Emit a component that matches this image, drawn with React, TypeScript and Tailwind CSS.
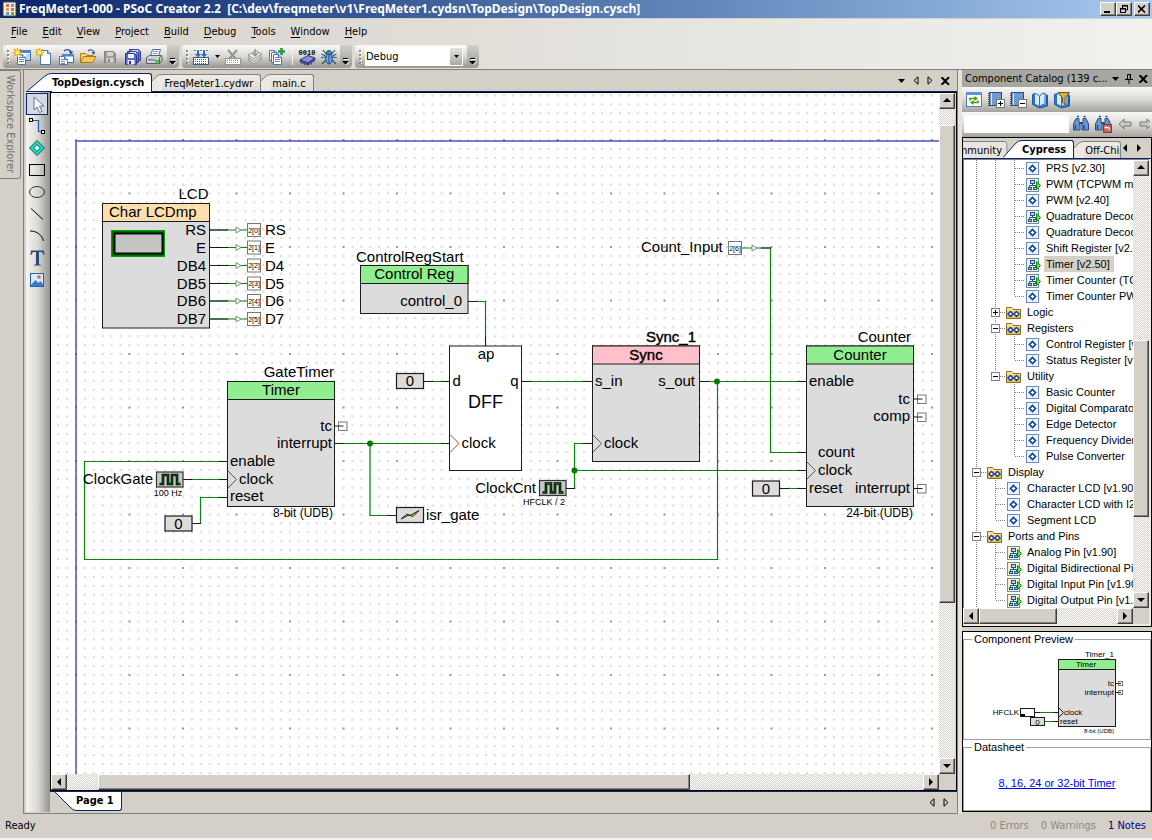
import { useState, type ReactNode } from "react";

/* ---------- small building blocks ---------- */

const bevel = "border border-t-white border-l-white border-r-[#404040] border-b-[#404040] bg-[#d4d0c8]";
const dither = "bg-[repeating-conic-gradient(#ffffff_0_25%,#d4d0c8_0_50%)] bg-[length:2px_2px]";

function Arrow({ dir }: { dir: "up" | "down" | "left" | "right" }) {
  const d = {
    up: "M0 5 L4 1 L8 5Z",
    down: "M0 2 L8 2 L4 6Z",
    left: "M6 0 L2 4 L6 8Z",
    right: "M2 0 L6 4 L2 8Z",
  }[dir];
  return (
    <svg width="8" height="8" viewBox="0 0 8 8" aria-hidden="true">
      <path d={d} fill="#000" />
    </svg>
  );
}

function ScrollButton({ dir }: { dir: "up" | "down" | "left" | "right" }) {
  return (
    <button aria-label={"Scroll " + dir} className={"flex size-4 shrink-0 items-center justify-center shadow-[inset_-1px_-1px_0_#808080] " + bevel}>
      <Arrow dir={dir} />
    </button>
  );
}

function ScrollBar({ vertical, before, thumb, after }: { vertical?: boolean; before: number; thumb: number; after: number }) {
  return (
    <div className={"flex shrink-0 " + (vertical ? "w-4 flex-col " : "h-4 ") + dither}>
      <ScrollButton dir={vertical ? "up" : "left"} />
      <div style={{ flexGrow: before }} />
      <div className={"shadow-[inset_-1px_-1px_0_#808080] " + bevel} style={{ flexGrow: thumb }} />
      <div style={{ flexGrow: after }} />
      <ScrollButton dir={vertical ? "down" : "right"} />
    </div>
  );
}

function Icon({ children }: { children: ReactNode }) {
  return (
    <svg width="18" height="18" viewBox="0 0 18 18" aria-hidden="true" className="shrink-0">
      {children}
    </svg>
  );
}

const Sun = () => (
  <g>
    <path d="M4.500 0V9M0 4.500H9M1 1L8 8M8 1L1 8" stroke="#f0a800" strokeWidth="1.300" />
    <circle cx="4.500" cy="4.500" r="2.300" fill="#fff27a" stroke="#f0b010" strokeWidth=".8" />
  </g>
);

const Page = ({ x, y, w = 9, h = 11 }: { x: number; y: number; w?: number; h?: number }) => (
  <g>
    <path d={`M${x + 0.5} ${y + 0.5}h${w - 3}l3 3v${h - 3}h${-w}z`} fill="#fff" stroke="#4a74b4" />
    <path d={`M${x + w - 3 + 0.5} ${y + 0.5}v3h3`} fill="#c5d8f2" stroke="#4a74b4" />
  </g>
);

const Lines = ({ x, y, n = 4, w = 5 }: { x: number; y: number; n?: number; w?: number }) => (
  <path d={Array.from({ length: n }, (_, i) => `M${x} ${y + i * 2 + 0.5}h${w}`).join("")} stroke="#5b84c0" />
);

const Floppy = ({ x, y, body, edge, label }: { x: number; y: number; body: string; edge: string; label: string }) => (
  <g>
    <path d={`M${x + 0.5} ${y + 0.5}h9l2 2v9h-11z`} fill={body} stroke={edge} />
    <rect x={x + 3} y={y + 1} width="6" height="4" fill={label} />
    <rect x={x + 2.5} y={y + 7} width="7" height="4.500" fill={label} />
    <rect x={x + 4} y={y + 8} width="2" height="3" fill={edge} />
  </g>
);

const Dots = ({ x, y, w, h, color }: { x: number; y: number; w: number; h: number; color: string }) => (
  <g>
    <rect x={x + 0.5} y={y + 0.5} width={w - 1} height={h - 1} fill="#fff" stroke={color} />
    <path
      d={Array.from({ length: Math.floor((h - 2) / 2) }, (_, r) => `M${x + 2} ${y + 2.5 + r * 2}h${w - 4}`).join("")}
      stroke={color}
      strokeDasharray="1 1"
    />
  </g>
);

const NewProject = () => (
  <Icon>
    <rect x="5.500" y="2.500" width="12" height="10" fill="#fff" stroke="#3f6db3" />
    <rect x="5" y="2" width="13" height="3" fill="#4f83cf" />
    <path d="M13 6h4v6h-4z" fill="#b9d3f5" />
    <Page x={4} y={6} w={8} h={10} />
    <Lines x={6} y={9} n={3} />
    <Sun />
  </Icon>
);
const NewFile = () => (
  <Icon>
    <Page x={5} y={2} w={10} h={14} />
    <Sun />
  </Icon>
);
const OpenProject = () => (
  <Icon>
    <path d="M7 3C9 1 13 1 14 4" fill="none" stroke="#1f4c96" strokeWidth="1.300" />
    <path d="M11.500 3.500h5l-2.500 3z" fill="#1f4c96" />
    <rect x="5.500" y="6.500" width="11" height="8" fill="#fff" stroke="#3f6db3" />
    <rect x="5" y="6" width="12" height="2.500" fill="#4f83cf" />
    <Page x={2} y={8} w={8} h={8} />
    <Lines x={4} y={11} n={3} w={4} />
  </Icon>
);
const OpenFolder = () => (
  <Icon>
    <path d="M9 3C11 1 14 2 15 4" fill="none" stroke="#345e9e" strokeWidth="1.200" />
    <path d="M12.500 4h4l-2 3z" fill="#345e9e" />
    <path d="M1.500 14.500v-9h5l1.500 2h6v3" fill="#f7d978" stroke="#a97a14" />
    <path d="M1.500 14.500l3-6h12.500l-3.500 6z" fill="#f8c95a" stroke="#a97a14" />
  </Icon>
);
const Save = () => (
  <Icon>
    <Floppy x={3} y={3} body="#9c9c98" edge="#83837f" label="#d4d3cd" />
  </Icon>
);
const SaveAll = () => (
  <Icon>
    <Floppy x={6} y={1} body="#7078d0" edge="#333c96" label="#e2e6fb" />
    <Floppy x={4} y={3} body="#6c74cc" edge="#333c96" label="#e2e6fb" />
    <Floppy x={2} y={5} body="#5c66c4" edge="#2b3488" label="#eef0ff" />
  </Icon>
);
const Printer = () => (
  <Icon>
    <path d="M5.500 8l2-6.500h8l-2 6.500z" fill="#fff" stroke="#4d6f9e" />
    <path d="M8 3.500h5M7.500 5.500h5" stroke="#7d9dca" />
    <path d="M1.500 9.500l3-2h12l-2 2v6h-13z" fill="#cfd4dc" stroke="#55606f" />
    <path d="M14.500 15.500l2.500-2.500V8" fill="none" stroke="#55606f" />
    <rect x="3" y="11" width="7" height="1.500" fill="#7a8596" />
    <rect x="10" y="12" width="4" height="2.500" fill="#2ecc2e" />
  </Icon>
);
const Build = () => (
  <Icon>
    <rect x="2" y="1" width="14" height="3" fill="#fff" />
    <path d="M2 2.500h14" stroke="#3c70bd" strokeDasharray="2 1" />
    <path d="M6 3v4M12 3v4" stroke="#2d67c4" strokeWidth="2" />
    <path d="M3 6h6l-3 3.500zM9 6h6l-3 3.500z" fill="#2d67c4" />
    <Dots x={1} y={9} w={16} h={8} color="#40587c" />
  </Icon>
);
const CancelBuild = () => (
  <Icon>
    <Dots x={1} y={10} w={16} h={7} color="#94948f" />
    <path d="M4 2l8 9M13 2l-8 9" stroke="#94948f" strokeWidth="2" />
  </Icon>
);
const Layers = () => (
  <Icon>
    <path d="M2 12l8-4 6 3-8 5z" fill="#d9d9d5" stroke="#94948f" />
    <path d="M2 9.500l8-4 6 3-8 5z" fill="#e4e4e0" stroke="#94948f" />
    <path d="M2 7l8-4 6 3-8 5z" fill="#eeeeeb" stroke="#94948f" />
    <path d="M9 1v6M6.500 5l2.500 3 3-3" stroke="#94948f" strokeWidth="1.500" fill="none" />
  </Icon>
);
const AddPages = () => (
  <Icon>
    <Page x={1} y={2} w={8} h={10} />
    <Page x={3} y={4} w={8} h={10} />
    <Page x={5} y={6} w={8} h={10} />
    <Lines x={7} y={9} n={3} />
    <path d="M13.500 0v7M10 3.500h7" stroke="#2c9a4a" strokeWidth="2.600" />
  </Icon>
);
const Chip = () => (
  <Icon>
    <path d="M2 12l8-4.500 7 2.500-7 5z" fill="#8a90dc" stroke="#2b2f80" />
    <path d="M2 12v2l8 3v-2zM10 15l7-5v2l-7 5z" fill="#474da4" stroke="#2b2f80" strokeWidth=".7" />
    <path d="M3.500 14.500v2M6.500 15.500v2M13.500 15v2M16 13v2" stroke="#666" />
    <text x="9" y="6.500" textAnchor="middle" fontSize="7" fontWeight="bold" fontFamily="'Liberation Mono', monospace">0010</text>
  </Icon>
);
const Bug = () => (
  <Icon>
    <path d="M3 2l4 5M15 2l-4 5M1 9.500l5-.5M17 9.500l-5-.5M2 16l4-4M16 16l-4-4M1.500 6l4 2M16.500 6l-4 2" stroke="#26527f" strokeWidth="1.200" fill="none" />
    <circle cx="9" cy="5" r="2.500" fill="#4c8ccc" stroke="#1d4673" />
    <ellipse cx="9" cy="11" rx="3.300" ry="5" fill="#6aabea" stroke="#1d4673" />
    <path d="M9 6.500v9" stroke="#1d4673" />
  </Icon>
);

const Grip = () => (
  <svg width="4" height="14" aria-hidden="true" className="shrink-0">
    {[0, 4, 8, 12].map((y) => (
      <g key={y}>
        <rect x="1" y={y + 1} width="2" height="2" fill="#fff" />
        <rect x="0" y={y} width="2" height="2" fill="#8c8a84" />
      </g>
    ))}
  </svg>
);

function ToolButton({ label, children }: { label: string; children: ReactNode }) {
  return (
    <button aria-label={label} className="flex h-5 w-[22px] shrink-0 items-center justify-center">
      {children}
    </button>
  );
}

function ToolStrip({ children }: { children: ReactNode }) {
  return (
    <div className="flex h-[23px]">
      <div className="flex items-center rounded-l-[3px] bg-linear-to-b from-[#fafaf8] via-[#d9d7d1] to-[#96958f] pl-1">{children}</div>
      <button aria-label="Toolbar options" className="flex w-3 items-end justify-center rounded-r-[4px] bg-linear-to-b from-[#d0cfca] to-[#9b9a94] pb-[3px]">
        <svg width="8" height="7" aria-hidden="true">
          <path d="M2 1.500h5M4 7l4-4" stroke="#fff" fill="none" />
          <path d="M1 .5h5" stroke="#000" />
          <path d="M0 3h7l-3.500 3.500z" fill="#000" />
        </svg>
      </button>
    </div>
  );
}

/* ---------- header ---------- */

const menus = ["File", "Edit", "View", "Project", "Build", "Debug", "Tools", "Window", "Help"];

function TitleBar() {
  const btn = "flex h-[14px] w-4 items-center justify-center shadow-[inset_-1px_-1px_0_#808080] " + bevel;
  return (
    <header className="flex h-[18px] shrink-0 items-center bg-linear-to-r from-[#0a246a] to-[#a6caf0] pr-[2px] pl-[2px]">
      <svg width="15" height="16" aria-hidden="true">
        <rect x="1" y="1" width="13" height="14" fill="#f2eee6" stroke="#444" />
        <path d="M.5 2v13M14.500 2v13" stroke="#222" strokeDasharray="1.500 1.500" />
        <rect x="4" y="3" width="3" height="3" fill="#e0703c" />
        <rect x="9" y="3" width="3" height="3" fill="#6c9ad8" />
        <rect x="4" y="7" width="3" height="3" fill="#dba63a" />
        <rect x="9" y="7" width="3" height="3" fill="#e0703c" />
        <rect x="4" y="11" width="3" height="3" fill="#6c9ad8" />
        <rect x="9" y="11" width="3" height="3" fill="#6aa84a" />
      </svg>
      <h1 className="ml-[2px] flex-1 overflow-hidden font-['Noto_Sans','DejaVu_Sans_Condensed',sans-serif] text-[12px] leading-[18px] font-bold whitespace-pre text-white">
        {"FreqMeter1-000 - PSoC Creator 2.2  [C:\\dev\\freqmeter\\v1\\FreqMeter1.cydsn\\TopDesign\\TopDesign.cysch]"}
      </h1>
      <button aria-label="Minimize" className={btn}>
        <svg width="10" height="9"><path d="M1 7h6" stroke="#000" strokeWidth="2" /></svg>
      </button>
      <button aria-label="Restore" className={btn}>
        <svg width="10" height="10">
          <path d="M3 2h6M3.500 1v3M8.500 1v5H6" stroke="#000" fill="none" />
          <path d="M3 1.500h6" stroke="#000" />
          <rect x="1.500" y="4.500" width="5" height="4" fill="#d4d0c8" stroke="#000" />
          <path d="M1 5h6" stroke="#000" />
        </svg>
      </button>
      <button aria-label="Close" className={btn + " ml-[2px]"}>
        <svg width="8" height="8"><path d="M0 .5l7 7M7 .5l-7 7" stroke="#000" strokeWidth="1.600" /></svg>
      </button>
    </header>
  );
}

function Commands() {
  return (
    <div className="flex h-[52px] shrink-0 flex-col border-t border-b border-t-[#d4d0c8] border-b-[#808080] bg-linear-to-r from-[#d6d2ca] to-[#f2f1ee]">
      <nav className="flex h-[26px] items-center gap-px pl-1">
        {menus.map((m) => (
          <button key={m} className="px-[7px] leading-4">
            <span className="underline underline-offset-2">{m[0]}</span>
            {m.slice(1)}
          </button>
        ))}
      </nav>
      <div className="flex gap-[3px] pl-[3px]">
        <ToolStrip>
          <Grip />
          <ToolButton label="New project"><NewProject /></ToolButton>
          <ToolButton label="New file"><NewFile /></ToolButton>
          <ToolButton label="Open project"><OpenProject /></ToolButton>
          <ToolButton label="Open file"><OpenFolder /></ToolButton>
          <ToolButton label="Save"><Save /></ToolButton>
          <ToolButton label="Save all"><SaveAll /></ToolButton>
          <ToolButton label="Print"><Printer /></ToolButton>
          <span className="w-[2px]" />
        </ToolStrip>
        <ToolStrip>
          <Grip />
          <ToolButton label="Build"><Build /></ToolButton>
          <button aria-label="Build options" className="flex w-[10px] justify-center">
            <svg width="5" height="3"><path d="M0 0h5L2.500 3z" /></svg>
          </button>
          <ToolButton label="Cancel build"><CancelBuild /></ToolButton>
          <ToolButton label="Generate application"><Layers /></ToolButton>
          <ToolButton label="Add component"><AddPages /></ToolButton>
          <span className="mr-[3px] ml-1 h-4 w-px bg-[#f4f3f0]" />
          <ToolButton label="Program"><Chip /></ToolButton>
          <ToolButton label="Debug"><Bug /></ToolButton>
        </ToolStrip>
        <ToolStrip>
          <Grip />
          <div className="mr-1 ml-[2px] flex h-[19px] items-center bg-white p-px">
            <select aria-label="Configuration" className="w-[84px] appearance-none bg-white leading-4 outline-none">
              <option>Debug</option>
            </select>
            <span className="flex h-[17px] w-3 items-center justify-center bg-linear-to-b from-[#e6e4df] to-[#a9a8a2]">
              <svg width="5" height="3"><path d="M0 0h5L2.500 3z" /></svg>
            </span>
          </div>
        </ToolStrip>
      </div>
    </div>
  );
}

/* ---------- schematic ---------- */

type Anchor = "start" | "middle" | "end";

function T({ x, y, a = "start", s = 15, heavy, children }: { x: number; y: number; a?: Anchor; s?: number; heavy?: boolean; children: ReactNode }) {
  return (
    <text x={x} y={y} textAnchor={a} fontSize={s} fill="#000" stroke={heavy ? "#000" : "none"} strokeWidth={heavy ? 0.4 : 0}>
      {children}
    </text>
  );
}

function Block({ x, y, w, h, fill, title, heavy }: { x: number; y: number; w: number; h: number; fill: string; title: string; heavy?: boolean }) {
  return (
    <g>
      <rect x={x} y={y} width={w} height={h} fill="#dcdcdc" stroke="#1c1c1c" />
      <rect x={x} y={y} width={w} height={18} fill={fill} stroke="#1c1c1c" />
      <T x={x + w / 2} y={y + 13.5} a="middle" heavy={heavy}>{title}</T>
    </g>
  );
}

const Wire = ({ d }: { d: string }) => <path d={d} fill="none" stroke="#0a850a" strokeWidth="1.200" />;
const Stub = ({ d }: { d: string }) => <path d={d} fill="none" stroke="#1c1c1c" />;
const Node = ({ x, y }: { x: number; y: number }) => <circle cx={x} cy={y} r="3" fill="#007d00" />;
const ClockEdge = ({ x, y }: { x: number; y: number }) => <path d={`M${x} ${y - 9}l9 9l-9 9`} fill="none" stroke="#333" strokeWidth=".8" />;
const Open = ({ x, y }: { x: number; y: number }) => (
  <g>
    <rect x={x + 4} y={y - 4} width="8.500" height="8.500" fill="#fff" stroke="#777" />
    <Stub d={`M${x} ${y}h9`} />
  </g>
);
const Zero = ({ x, y }: { x: number; y: number }) => (
  <g>
    <rect x={x} y={y} width="27" height="15" fill="#dcdcdc" stroke="#1c1c1c" strokeWidth="1.200" />
    <T x={x + 13.5} y={y + 12.5} a="middle">0</T>
  </g>
);
const Clock = ({ x, y }: { x: number; y: number }) => (
  <g>
    <rect x={x} y={y} width="26.500" height="15" fill="#c8c8c8" stroke="#333" strokeWidth="1.200" />
    <path d={`M${x + 3} ${y + 12}h3.500v-9h5v9h4v-9h5v9h3.500`} fill="none" stroke="#000" strokeWidth="2.600" />
    <path d={`M${x + 3} ${y + 12}h3.500v-9h5v9h4v-9h5v9h3.500`} fill="none" stroke="#0c6a12" strokeWidth="1" />
  </g>
);

const lcdPins = [
  ["RS", "RS", 230],
  ["E", "E", 247.5],
  ["DB4", "D4", 265.5],
  ["DB5", "D5", 283.5],
  ["DB6", "D6", 301],
  ["DB7", "D7", 319],
] as const;

function Schematic() {
  return (
    <svg className="block h-full w-full" fontFamily="'Liberation Sans', Arial, sans-serif" role="img" aria-label="Schematic">
      <defs>
        <pattern id="minor" x="6.170" y="1.420" width="8.917" height="8.917" patternUnits="userSpaceOnUse">
          <rect x="0" y="0" width="2" height="2" fill="#dadada" />
        </pattern>
        <pattern id="major" x="24" y="46" width="53.500" height="53.500" patternUnits="userSpaceOnUse">
          <rect x="0" y="0" width="2" height="2" fill="#9a9a9a" />
        </pattern>
      </defs>
      <rect width="100%" height="100%" fill="#fff" />
      <rect width="100%" height="100%" fill="url(#minor)" />
      <rect width="100%" height="100%" fill="url(#major)" />
      <g transform="translate(-51 -93)">
        <path d="M2000 141H76V2000" fill="none" stroke="#3636ae" strokeOpacity=".65" strokeWidth="2" />

        {/* LCD */}
        <T x={208.5} y={199} a="end">LCD</T>
        <rect x="102.500" y="203.500" width="107" height="124.500" fill="#dcdcdc" stroke="#1c1c1c" />
        <rect x="102.500" y="203.500" width="107" height="18" fill="#ffdead" stroke="#1c1c1c" />
        <T x={109} y={217}>Char LCDmp</T>
        <rect x="111.500" y="230.500" width="53" height="26" fill="#007000" stroke="#00a000" />
        <rect x="114.500" y="233.500" width="48" height="20" fill="#c4c4c4" stroke="#0a0a0a" strokeWidth="2" />
        {lcdPins.map(([pin, port, y], i) => (
          <g key={pin}>
            <T x={206} y={y + 5} a="end">{pin}</T>
            <Wire d={`M210 ${y}h37`} />
            <Stub d={`M210 ${y}h18`} />
            <path d={`M236 ${y - 3}l5 3l-5 3z`} fill="#fff" stroke="#888" />
            <rect x="247.500" y={y - 6.5} width="13" height="13" fill="#fff" stroke="#777" />
            <T x={254} y={y + 2.5} a="middle" s={7}>2[{i}]</T>
            <T x={265} y={y + 5}>{port}</T>
          </g>
        ))}

        {/* wires */}
        <Wire d="M227 461.500H84.500V559.500H717.500V381.500" />
        <Wire d="M183 479.500H227M192 523.500H200.500V497.500H227" />
        <Wire d="M335 443.500H450M370 443.500V515.500H396" />
        <Wire d="M468 301.500H485.500V346M424 381.500H450M522 381.500H592" />
        <Wire d="M566 488.500H574.500V443.500H592M574.500 470.500H806" />
        <Wire d="M700 381.500H806M780 488.500H806" />
        <Wire d="M742 248H770.500V452.500H806" />
        <Stub d="M219 461.500h9M183 479.500h9M219 479.500h9M192 523.500h9M219 497.500h9M335 443.500h9M441 443.500h9M388 515.500h9" />
        <Stub d="M468 301.500h9M485.500 337v9M424 381.500h9M441 381.500h9M522 381.500h9M583 381.500h9M566 488.500h9M583 443.500h9" />
        <Stub d="M700 381.500h9M797 381.500h9M797 452.500h9M797 470.500h9M780 488.500h9M797 488.500h9M761 248h10" />
        <Node x={370} y={443.5} />
        <Node x={574.5} y={470.5} />
        <Node x={717} y={381.5} />

        {/* GateTimer */}
        <T x={334} y={377} a="end">GateTimer</T>
        <Block x={227.5} y={381.5} w={107} h={125} fill="#90ee90" title="Timer" />
        <T x={332} y={431} a="end">tc</T>
        <T x={332} y={448} a="end">interrupt</T>
        <T x={230} y={466}>enable</T>
        <T x={239} y={484}>clock</T>
        <T x={230} y={501}>reset</T>
        <ClockEdge x={227.5} y={479.5} />
        <Open x={334.5} y={426} />
        <T x={333} y={517} a="end" s={12}>8-bit (UDB)</T>
        <T x={153} y={484} a="end">ClockGate</T>
        <Clock x={156.5} y={472} />
        <T x={168} y={496} a="middle" s={9}>100 Hz</T>
        <Zero x={165} y={516} />

        {/* interrupt */}
        <rect x="396.500" y="507.500" width="27" height="15" fill="#dcdcdc" stroke="#1c1c1c" strokeWidth="1.200" />
        <path d="M401 519l6-5 3 1.500 9-5-6 6-4-1.500z" fill="#e0d814" stroke="#222" />
        <T x={426} y={520}>isr_gate</T>

        {/* Control register */}
        <T x={356} y={262}>ControlRegStart</T>
        <Block x={360.5} y={265.5} w={107.5} h={48} fill="#90ee90" title="Control Reg" />
        <T x={462} y={306} a="end">control_0</T>

        {/* D flip-flop */}
        <rect x="449.500" y="346" width="72" height="124.500" fill="#fff" stroke="#1c1c1c" />
        <T x={486} y={359} a="middle">ap</T>
        <T x={452.5} y={386}>d</T>
        <T x={518.5} y={386} a="end">q</T>
        <T x={485.5} y={408} a="middle" s={18}>DFF</T>
        <T x={461.5} y={448}>clock</T>
        <ClockEdge x={450} y={443.5} />
        <Zero x={396.5} y={373.5} />

        {/* Sync */}
        <T x={696} y={342} a="end" heavy>Sync_1</T>
        <Block x={592.5} y={346} w={107} h={115.5} fill="#ffc0cb" title="Sync" heavy />
        <T x={595} y={386}>s_in</T>
        <T x={695} y={386} a="end">s_out</T>
        <T x={604} y={448}>clock</T>
        <ClockEdge x={592.5} y={443.5} />
        <T x={536} y={493} a="end">ClockCnt</T>
        <Clock x={539.5} y={480.5} />
        <T x={565} y={505} a="end" s={9}>HFCLK / 2</T>

        {/* Count input */}
        <T x={641} y={252}>Count_Input</T>
        <rect x="728.500" y="241.500" width="13" height="13" fill="#fff" stroke="#777" />
        <T x={735} y={250.5} a="middle" s={7}>2[6]</T>
        <path d="M752 245l5 3l-5 3z" fill="#fff" stroke="#888" />

        {/* Counter */}
        <T x={911} y={342} a="end">Counter</T>
        <Block x={806.5} y={346} w={107} h={160.5} fill="#90ee90" title="Counter" />
        <T x={809} y={386}>enable</T>
        <T x={910} y={404} a="end">tc</T>
        <T x={910} y={421} a="end">comp</T>
        <T x={818} y={457}>count</T>
        <T x={818} y={475}>clock</T>
        <T x={809} y={493}>reset</T>
        <T x={910} y={493} a="end">interrupt</T>
        <ClockEdge x={806.5} y={470.5} />
        <Open x={913.5} y={399} />
        <Open x={913.5} y={417} />
        <Open x={913.5} y={488.5} />
        <T x={913} y={517} a="end" s={12}>24-bit (UDB)</T>
        <Zero x={752.5} y={481} />
      </g>
    </svg>
  );
}

/* ---------- document panel ---------- */

const palette: [string, ReactNode][] = [
  ["Select", <path key="a" d="M6 2v13l3-3 2.500 5.500 2.500-1.200L11.500 11H16z" fill="#fff" stroke="#5a7498" />],
  ["Wire", <g key="a"><path d="M5 3.500h5.500v11h5" fill="none" stroke="#2156b8" strokeWidth="1.200" /><rect x="1.500" y="1.500" width="3" height="3" fill="#fff" stroke="#000" /><rect x="13.500" y="13.500" width="3" height="3" fill="#fff" stroke="#000" /></g>],
  ["Component", <g key="a"><path d="M9 1.500L16.500 9L9 16.500L1.500 9z" fill="#20e0c0" stroke="#055" /><path d="M9 5.500L12.500 9L9 12.500L5.500 9z" fill="#d5f5ee" stroke="#055" /></g>],
  ["Rectangle", <rect key="a" x="1.500" y="3.500" width="15" height="11" fill="none" stroke="#000" />],
  ["Ellipse", <ellipse key="a" cx="9" cy="9" rx="7.500" ry="5.500" fill="none" stroke="#333" />],
  ["Line", <path key="a" d="M3 3.500l12 11" stroke="#000" />],
  ["Arc", <path key="a" d="M2 4c7 0 12 4 13.500 10" stroke="#000" fill="none" />],
  ["Text", <path key="a" d="M3 1.500h13l.5 4.500h-1c-.4-2-1-3-3-3h-1.500v11c0 1.500.5 1.800 2 1.800v.7H6v-.7c1.500 0 2-.3 2-1.800v-11H6.500c-2 0-2.600 1-3 3h-1z" fill="#2c4a7c" />],
  ["Image", <g key="a"><rect x="2.500" y="2.500" width="13" height="13" fill="#dce9fb" stroke="#2a5fae" /><path d="M3 14l4.500-5 3 3 2-2L15 13v2H3z" fill="#3a78cc" /><circle cx="11" cy="6" r="1.800" fill="#e0672a" /></g>],
];

function TabSlant({ active }: { active?: boolean }) {
  return active ? (
    <svg width="24" height="18" aria-hidden="true" className="shrink-0">
      <path d="M0 18L17 3Q20 .5 24 .5V18z" fill="#fff" />
      <path d="M0 17.500L17 3Q20 .5 24 .5" fill="none" stroke="#0a246a" />
    </svg>
  ) : (
    <svg width="10" height="17" aria-hidden="true" className="shrink-0">
      <path d="M0 7L5 2Q7 .5 10 .5V17H0z" fill="#ece9e3" />
      <path d="M0 7L5 2Q7 .5 10 .5" fill="none" stroke="#808080" />
    </svg>
  );
}

const inactiveBody = "h-[17px] rounded-tr-[3px] border-t border-r border-[#808080] bg-linear-to-b from-[#efece7] to-[#dedbd4] leading-[17px] whitespace-nowrap";
const activeBody = "-mb-px h-[19px] rounded-tr-[3px] border-t border-r border-[#0a246a] bg-white leading-[18px] font-bold whitespace-nowrap";

function CloseX() {
  return <svg width="9" height="8" aria-hidden="true"><path d="M.5 0l7.500 8M8 0L.5 8" stroke="#000" strokeWidth="2" /></svg>;
}

function DocumentPanel() {
  const [tool, setTool] = useState("Select");
  return (
    <main className="flex min-w-0 flex-1 flex-col border-r border-b border-l border-[#808080] pb-px pl-[2px]">
      <div className="flex h-[22px] shrink-0 items-end border-b border-[#0a246a] pl-[2px]" role="tablist">
        <TabSlant active />
        <button role="tab" aria-selected="true" className={activeBody + " pr-[7px]"}>TopDesign.cysch</button>
        <TabSlant />
        <button role="tab" aria-selected="false" className={inactiveBody + " pr-[7px] pl-[2px]"}>FreqMeter1.cydwr</button>
        <TabSlant />
        <button role="tab" aria-selected="false" className={inactiveBody + " pr-[7px] pl-px"}>main.c</button>
        <div className="ml-auto flex items-center gap-2 self-center pr-[7px]">
          <button aria-label="Open documents"><svg width="7" height="4" className="block"><path d="M0 0h7L3.500 4z" /></svg></button>
          <button aria-label="Previous tab"><svg width="6" height="9" className="block"><path d="M5 .8v7.400L1 4.500z" fill="none" stroke="#000" /></svg></button>
          <button aria-label="Next tab"><svg width="6" height="9" className="block"><path d="M1 .8v7.400L5 4.500z" fill="none" stroke="#000" /></svg></button>
          <button aria-label="Close document"><CloseX /></button>
        </div>
      </div>
      <div className="flex min-h-0 flex-1">
        <div className="flex w-6 shrink-0 flex-col bg-linear-to-r from-[#f7f6f4] via-[#dad8d2] to-[#94938d] pt-px">
          {palette.map(([name, art]) => (
            <button
              key={name}
              aria-label={name}
              onClick={() => setTool(name)}
              className={"flex h-[22px] w-[22px] items-center justify-center border " + (tool === name ? "border-[#0a246a] bg-[#d5d9e4]" : "border-transparent")}
            >
              <Icon>{art}</Icon>
            </button>
          ))}
        </div>
        <div className="flex min-w-0 flex-1 flex-col">
          <div className="flex min-h-0 flex-1 flex-col border border-black pr-px">
            <div className="flex min-h-0 flex-1">
              <div className="min-w-0 flex-1 overflow-hidden"><Schematic /></div>
              <ScrollBar vertical before={16} thumb={478} after={156} />
            </div>
            <div className="flex">
              <div className="flex flex-1 flex-col"><ScrollBar before={31} thumb={592} after={234} /></div>
              <div className="w-4 bg-[#d4d0c8]" />
            </div>
          </div>
          <div className="flex h-[21px] shrink-0 items-start border-t border-[#0a246a]">
            <svg width="26" height="19" aria-hidden="true">
              <path d="M5 0L20 15Q23 18.500 26 18.500V0z" fill="#fff" />
              <path d="M5 0L20 15Q23 18.500 26 18.500" fill="none" stroke="#0a246a" />
            </svg>
            <button className="h-[19px] rounded-br-[3px] border-r border-b border-[#0a246a] bg-white pr-[7px] leading-[18px] font-bold">Page 1</button>
            <div className="ml-auto flex items-center gap-2 self-center pr-2">
              <button aria-label="Previous page"><svg width="6" height="9" className="block"><path d="M5 .8v7.400L1 4.500z" fill="none" stroke="#000" /></svg></button>
              <button aria-label="Next page"><svg width="6" height="9" className="block"><path d="M1 .8v7.400L5 4.500z" fill="none" stroke="#000" /></svg></button>
            </div>
          </div>
        </div>
      </div>
    </main>
  );
}

/* ---------- component catalog ---------- */

type Row = { g: string; kind: "leaf" | "chip" | "folder"; text: string; on?: boolean };

/* guide letters: v line, e branch, l last branch, p closed box, m open box, n open box at the end of its line, s space */
const rows: Row[] = [
  { g: "vve", kind: "leaf", text: "PRS [v2.30]" },
  { g: "vve", kind: "chip", text: "PWM (TCPWM mode)" },
  { g: "vve", kind: "leaf", text: "PWM [v2.40]" },
  { g: "vve", kind: "chip", text: "Quadrature Decoder (TCPWM)" },
  { g: "vve", kind: "leaf", text: "Quadrature Decoder [v2.20]" },
  { g: "vve", kind: "leaf", text: "Shift Register [v2.20]" },
  { g: "vve", kind: "chip", text: "Timer [v2.50]", on: true },
  { g: "vve", kind: "chip", text: "Timer Counter (TCPWM mode)" },
  { g: "vvl", kind: "leaf", text: "Timer Counter PWM" },
  { g: "vp", kind: "folder", text: "Logic" },
  { g: "vm", kind: "folder", text: "Registers" },
  { g: "vve", kind: "leaf", text: "Control Register [v1.70]" },
  { g: "vvl", kind: "leaf", text: "Status Register [v1.80]" },
  { g: "vn", kind: "folder", text: "Utility" },
  { g: "vse", kind: "leaf", text: "Basic Counter" },
  { g: "vse", kind: "leaf", text: "Digital Comparator" },
  { g: "vse", kind: "leaf", text: "Edge Detector" },
  { g: "vse", kind: "leaf", text: "Frequency Divider" },
  { g: "vsl", kind: "leaf", text: "Pulse Converter" },
  { g: "m", kind: "folder", text: "Display" },
  { g: "ve", kind: "leaf", text: "Character LCD [v1.90]" },
  { g: "ve", kind: "leaf", text: "Character LCD with I2C" },
  { g: "vl", kind: "leaf", text: "Segment LCD" },
  { g: "m", kind: "folder", text: "Ports and Pins" },
  { g: "ve", kind: "chip", text: "Analog Pin [v1.90]" },
  { g: "ve", kind: "chip", text: "Digital Bidirectional Pin" },
  { g: "ve", kind: "chip", text: "Digital Input Pin [v1.90]" },
  { g: "vl", kind: "chip", text: "Digital Output Pin [v1.90]" },
];

function Guide({ c }: { c: string }) {
  const box = "pmn".includes(c);
  return (
    <svg width="19" height="16" aria-hidden="true" className="shrink-0">
      <g stroke="#808080" strokeDasharray="1 1">
        {c !== "s" && <path d={"ln".includes(c) ? "M9.500 0v8" : "M9.500 0v16"} />}
        {c !== "s" && c !== "v" && <path d="M10 8.500h9" />}
      </g>
      {box && <rect x="5.500" y="4.500" width="8" height="8" fill="#fff" stroke="#808080" />}
      {box && <path d={c === "p" ? "M7 8.500h5M9.500 6v5" : "M7 8.500h5"} stroke="#000" />}
    </svg>
  );
}

function TreeIcon({ kind }: { kind: Row["kind"] }) {
  if (kind === "leaf")
    return (
      <svg width="20" height="16" aria-hidden="true" className="shrink-0">
        <rect x="2.500" y="2.500" width="12" height="12" fill="#eef4fe" stroke="#6d8bb8" />
        <path d="M8.500 5.500l3 3-3 3-3-3z" fill="#fff" stroke="#0a3ea0" strokeWidth="1.600" />
      </svg>
    );
  if (kind === "chip")
    return (
      <svg width="20" height="16" aria-hidden="true" className="shrink-0">
        <rect x="2.500" y="2.500" width="12" height="13" fill="#fff3b8" stroke="#6d8bb8" />
        <path d="M8.500 7v2M5.500 12v-2.500h6V12" fill="none" stroke="#1d4fa8" />
        <rect x="6.500" y="4.500" width="4" height="3" fill="#bcd4f6" stroke="#1d4fa8" />
        <rect x="4.500" y="11.500" width="3" height="2" fill="#bcd4f6" stroke="#1d4fa8" />
        <rect x="9.500" y="11.500" width="3" height="2" fill="#bcd4f6" stroke="#1d4fa8" />
        <path d="M12.500 5.500l4 4-4 4z" fill="#5fe03c" stroke="#138a13" />
      </svg>
    );
  return (
    <svg width="20" height="16" aria-hidden="true" className="shrink-0">
      <path d="M1.500 14.500v-11h5l1.500 2h7.500v9z" fill="#f0c04c" stroke="#8a6a1c" />
      <path d="M2 7h13v-1H8l-1.500-2H2z" fill="#f9e4a4" />
      <path d="M5.500 7.500l2.500 2.500-2.500 2.500L3 10zM11.500 7.500l2.500 2.500-2.500 2.500L9 10z" fill="#fff" stroke="#0a3ea0" strokeWidth="1.400" />
    </svg>
  );
}

const Book = ({ sign }: { sign: string }) => (
  <Icon>
    <rect x="2.500" y="1.500" width="12" height="13" fill="#6f9ad0" stroke="#27507f" />
    <path d="M4.500 2v12" stroke="#dce8f8" />
    <path d="M1.500 2v13" stroke="#555" strokeDasharray="1 1" />
    <rect x="9.500" y="8.500" width="8" height="8" fill="#fff" stroke="#777" />
    <path d={sign} stroke="#000" />
  </Icon>
);

const OpenBook = ({ filter }: { filter?: boolean }) => (
  <Icon>
    <path d="M1.500 3.500l2-1v11l5 2.500 7-2V3.500l1 1v10.500l-8 2-7-3.500z" fill="#2d7dd8" stroke="#1b5cae" />
    <path d="M3.500 2.500q3.500 0 5 3v10.500q-2-2.500-5-2.500zM8.500 5.500q1-3 5.500-3.500v11q-4 0-5.500 3z" fill="#d8ebff" stroke="#2d6fc0" />
    {filter && <path d="M5 1.500h11.500L12 7v6l-2.500-1.500V7z" fill="#d8b04a" stroke="#6f5312" />}
  </Icon>
);

const Binoculars = ({ back }: { back?: boolean }) => (
  <Icon>
    <path d="M4 3.500h3v3l1 2v6.500H1.500V9zM11 3.500h3L16.500 9v6H10V8.500l1-2z" fill="#6c96d0" stroke="#25497e" />
    <path d="M5 1.500h2M11.500 1.500h2M3.500 10v4M12 10v4" stroke="#25497e" strokeWidth="1.500" />
    <path d="M7 8h4" stroke="#25497e" strokeWidth="2" />
    {back && <g><rect x="9.500" y="9.500" width="8" height="8" fill="#c9605a" stroke="#98342c" /><path d="M11 12.500h4v3M12.500 11l-1.500 1.500 1.500 1.500" stroke="#fff" fill="none" /></g>}
  </Icon>
);

const strip = "flex shrink-0 items-center bg-linear-to-b from-[#f8f8f6] via-[#dcdad5] to-[#a4a39d]";

function CatalogPanel() {
  return (
    <aside className="flex w-[190px] shrink-0 flex-col pb-[2px]">
      <div className="flex h-[17px] shrink-0 items-center justify-between bg-[#a7a6a1] pr-1 pl-[3px]">
        <h2 className="leading-4 whitespace-nowrap">Component Catalog (139 c...</h2>
        <div className="flex shrink-0 items-center gap-[6px]">
          <button aria-label="Panel menu"><svg width="7" height="4" className="block"><path d="M0 0h7L3.500 4z" /></svg></button>
          <button aria-label="Pin panel"><svg width="8" height="10" className="block"><path d="M2.500 5V.5h3V5M0 5.500h8M4 5.500V10M5.200 0v5" stroke="#000" fill="none" /></svg></button>
          <button aria-label="Close panel"><CloseX /></button>
        </div>
      </div>
      <div className={strip + " h-[25px] pl-px"}>
        <ToolButton label="Refresh">
          <Icon>
            <rect x="1.500" y="2.500" width="15" height="13" fill="#fdfdf4" stroke="#4a80c8" />
            <rect x="1" y="1" width="16" height="3" fill="#5b93dc" />
            <path d="M5 9.500V7.500h5M13 9.500v2H8" fill="none" stroke="#4b9a1c" strokeWidth="1.600" />
            <path d="M9.500 5l3.500 2.500-3.500 2.500zM8.500 9L5 11.500 8.500 14z" fill="#4b9a1c" />
          </Icon>
        </ToolButton>
        <ToolButton label="Expand all"><Book sign="M11 12.500h5M13.500 10v5" /></ToolButton>
        <ToolButton label="Collapse all"><Book sign="M11 12.500h5" /></ToolButton>
        <ToolButton label="Open datasheet"><OpenBook /></ToolButton>
        <ToolButton label="Filter"><OpenBook filter /></ToolButton>
      </div>
      <div className={strip + " h-[25px] overflow-hidden pb-[2px] pl-[2px]"}>
        <input aria-label="Search components" className="mr-px h-[18px] w-[106px] min-w-0 flex-1 bg-white outline-none" />
        <ToolButton label="Find"><Binoculars /></ToolButton>
        <ToolButton label="Clear search"><Binoculars back /></ToolButton>
        <ToolButton label="Back"><Icon><path d="M3 9l5-5v3h7v4H8v3z" fill="#c9c8c3" stroke="#777" /></Icon></ToolButton>
        <button aria-label="Forward" className="w-4"><svg width="14" height="18" viewBox="0 0 14 18"><path d="M16 9l-5-5v3H4v4h7v3z" fill="#c9c8c3" stroke="#777" /></svg></button>
      </div>
      <div className="flex min-h-0 flex-1 flex-col border border-black">
        <div className="flex h-[21px] shrink-0 items-end overflow-hidden border-b border-[#0a246a]" role="tablist">
          <button role="tab" aria-selected="false" className="flex h-[17px] w-[40px] justify-end overflow-hidden border-t border-[#808080] bg-[#e8e5df] pr-px leading-[17px]">Community</button>
          <svg width="19" height="18" aria-hidden="true" className="shrink-0">
            <path d="M0 18V1h3q2 0 2 3v8z" fill="#e8e5df" />
            <path d="M0 1.500h2q2 0 2 3V13" fill="none" stroke="#808080" />
            <path d="M0 18L13 3Q15 .5 19 .5V18z" fill="#fff" />
            <path d="M0 17.500L13 3Q15 .5 19 .5" fill="none" stroke="#0a246a" />
          </svg>
          <button role="tab" aria-selected="true" className={activeBody + " pr-[7px]"}>Cypress</button>
          <TabSlant />
          <button role="tab" aria-selected="false" className={inactiveBody + " min-w-0 flex-1 overflow-hidden pl-px text-left"}>Off-Chip</button>
          <div className="flex h-full items-center gap-[6px] bg-[#d4d0c8] pr-2">
            <button aria-label="Previous category"><Arrow dir="left" /></button>
            <button aria-label="Next category"><Arrow dir="right" /></button>
          </div>
        </div>
        <div className="flex min-h-0 flex-1 flex-col border-r-2 border-b-2 border-[#ece9e3] bg-white">
          <div className="flex min-h-0 flex-1 border-t border-l border-[#808080]">
            <ul className="min-w-0 flex-1 overflow-hidden pl-[3px] font-['Liberation_Sans',Arial,sans-serif]">
              {rows.map((r) => (
                <li key={r.text} className="flex h-4 whitespace-nowrap">
                  {r.g.split("").map((c, i) => (
                    <Guide key={i} c={c} />
                  ))}
                  <TreeIcon kind={r.kind} />
                  <span className={"pr-1 pl-[2px] leading-4 " + (r.on ? "bg-[#d4d0c8]" : "")}>{r.text}</span>
                </li>
              ))}
            </ul>
            <ScrollBar vertical before={165} thumb={176} after={76} />
          </div>
          <div className="flex">
            <div className="flex flex-1 flex-col"><ScrollBar before={0} thumb={76} after={60} /></div>
            <div className="w-4 bg-[#d4d0c8]" />
          </div>
        </div>
      </div>
      <div className="mt-1 flex h-[181px] shrink-0 flex-col border border-black bg-white font-['Liberation_Sans',Arial,sans-serif]">
        <fieldset className="flex h-[108px] flex-col border border-[#a0a0a0]">
          <legend className="ml-2 px-[2px] leading-[14px]">Component Preview</legend>
          <svg className="block h-[90px] w-full" fontFamily="'Liberation Sans', Arial, sans-serif" fontSize="8" role="img" aria-label="Timer symbol">
            <g transform="translate(-1 2)">
              <text x="151" y="9" textAnchor="end">Timer_1</text>
              <rect x="95.500" y="11.500" width="57" height="67" fill="#dcdcdc" stroke="#1c1c1c" />
              <rect x="95.500" y="11.500" width="57" height="10" fill="#90ee90" stroke="#1c1c1c" />
              <text x="123" y="19" textAnchor="middle">Timer</text>
              <text x="151" y="38" textAnchor="end">tc</text>
              <text x="151" y="47" textAnchor="end">interrupt</text>
              <text x="101" y="67">clock</text>
              <text x="97" y="76">reset</text>
              <text x="151" y="85" textAnchor="end" fontSize="6">8-bit (UDB)</text>
              <text x="56" y="67" textAnchor="end">HFCLK</text>
              <path d="M95.500 59.500l5 5-5 5" fill="none" stroke="#1c1c1c" />
              <path d="M72 64.500h24M81 73.500h14" stroke="#0a850a" />
              <path d="M90 64.500h6M72 64.500h5M90 73.500h6" stroke="#1c1c1c" />
              <rect x="57.500" y="60.500" width="14" height="8" fill="#fff" stroke="#1c1c1c" />
              <path d="M58 67h4" stroke="#000" strokeWidth="2" />
              <rect x="67.500" y="69.500" width="14" height="8" fill="#dcdcdc" stroke="#1c1c1c" />
              <text x="74.500" y="76.500" textAnchor="middle">0</text>
              <path d="M153 35.500h5M153 44.500h5" stroke="#1c1c1c" />
              <rect x="155.500" y="33.500" width="4" height="4" fill="none" stroke="#777" />
              <rect x="155.500" y="42.500" width="4" height="4" fill="none" stroke="#777" />
            </g>
          </svg>
        </fieldset>
        <fieldset className="flex min-h-0 flex-1 flex-col border border-[#a0a0a0]">
          <legend className="ml-2 px-[2px] leading-[14px]">Datasheet</legend>
          <div className="flex justify-center pt-[22px]">
            <a href="#datasheet" className="leading-[14px] text-[#0000ff] underline">8, 16, 24 or 32-bit Timer</a>
          </div>
        </fieldset>
      </div>
    </aside>
  );
}

/* ---------- page ---------- */

export default function App() {
  return (
    <div className="flex h-screen flex-col bg-[#d4d0c8] font-['DejaVu_Sans_Condensed','DejaVu_Sans',sans-serif] text-[11px] text-black">
      <TitleBar />
      <Commands />
      <div className="flex min-h-0 flex-1">
        <div className="w-[23px] shrink-0">
          <button className="flex h-[109px] w-[21px] items-center justify-center rounded-r-[3px] border border-l-0 border-[#808080] whitespace-nowrap text-[#6e6c67] [writing-mode:vertical-rl]">
            Workspace Explorer
          </button>
        </div>
        <DocumentPanel />
        <div className="w-1 shrink-0 bg-[#e6e3dd]" />
        <CatalogPanel />
      </div>
      <footer className="flex h-[26px] shrink-0 items-center gap-3 border-b-2 border-[#f4f2ee] pr-[6px] pl-[5px]">
        <span className="flex-1">Ready</span>
        <span className="text-[#8a8883]">0 Errors</span>
        <span className="text-[#8a8883]">0 Warnings</span>
        <span className="text-[#000080]">1 Notes</span>
      </footer>
    </div>
  );
}
